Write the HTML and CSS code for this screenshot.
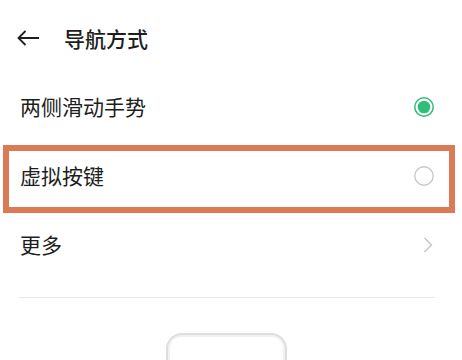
FILE: index.html
```html
<!DOCTYPE html>
<html lang="zh-CN">
<head>
<meta charset="UTF-8">
<meta name="viewport" content="width=device-width, initial-scale=1.0">
<title>导航方式</title>
<link rel="stylesheet" href="styles.css">
</head>
<body>
  <div class="header">
    <svg class="back" width="23" height="16" viewBox="0 0 23 16">
      <path d="M22 8H1.5M8.5 1L1.5 8l7 7" fill="none" stroke="#1e1e1e" stroke-width="1.8"/>
    </svg>
    <h1>导航方式</h1>
  </div>

  <div class="list">
    <div class="row">
      <span class="label">两侧滑动手势</span>
      <!-- selected radio -->
      <svg class="radio" width="20" height="20" viewBox="0 0 20 20">
        <circle cx="10" cy="10" r="9.2" fill="none" stroke="#2fbf78" stroke-width="1.5"/>
        <circle cx="10" cy="10" r="6.3" fill="#2fbf78"/>
      </svg>
    </div>
    <div class="row row-marked">
      <span class="label">虚拟按键</span>
      <svg class="radio" width="20" height="20" viewBox="0 0 20 20">
        <circle cx="10" cy="10" r="9.2" fill="none" stroke="#c9c9c9" stroke-width="1.4"/>
      </svg>
    </div>
    <div class="row">
      <span class="label">更多</span>
      <svg class="chevron" width="10" height="16" viewBox="0 0 10 16">
        <path d="M1.5 1l7 7-7 7" fill="none" stroke="#c4c4c4" stroke-width="1.4"/>
      </svg>
    </div>
  </div>

  <div class="divider"></div>

  <!-- top of the navigation preview, cut by the screen edge -->
  <div class="preview"></div>
</body>
</html>
```

FILE: styles.css
```css
body {
  margin: 0;
  padding: 0;
  background-color: #fff;
  font-family: "Noto Sans CJK SC", "Noto Sans", sans-serif;
  color: #1e1e1e;
}
.header {
  display: flex;
  align-items: center;
  height: 68px;
  padding-top: 4px;
  padding-left: 17px;
}
.back {
  margin-right: 24px;
}
h1 {
  font-size: 21px;
  font-weight: 500;
  margin: 0;
  line-height: 1;
}
.row {
  position: relative;
  display: flex;
  align-items: center;
  justify-content: space-between;
  height: 69px;
  padding: 0 28px 0 20px;
}
.label {
  font-size: 21px;
  line-height: 1;
}
.row-marked::after {
  content: "";
  position: absolute; /* annotation box drawn over the row */
  left: 3px;
  top: 4px;
  width: 452px;
  height: 68px;
  box-sizing: border-box;
  border: 6px solid #dc7a55;
}
.chevron {
  margin-right: 1px;
}
.divider {
  height: 1px;
  background-color: #e9e9e9;
  margin: 18px 27px 0 18px;
}
.preview {
  width: 121px;
  height: 27px;
  margin: 35px 0 0 166px;
  box-sizing: border-box;
  border: 2px solid #dedede;
  border-bottom: none;
  border-radius: 16px 16px 0 0;
  box-shadow: inset 0 2px 0 0 #f1f1f1, inset 2px 0 0 0 #f1f1f1, inset -2px 0 0 0 #f1f1f1;
}
```
